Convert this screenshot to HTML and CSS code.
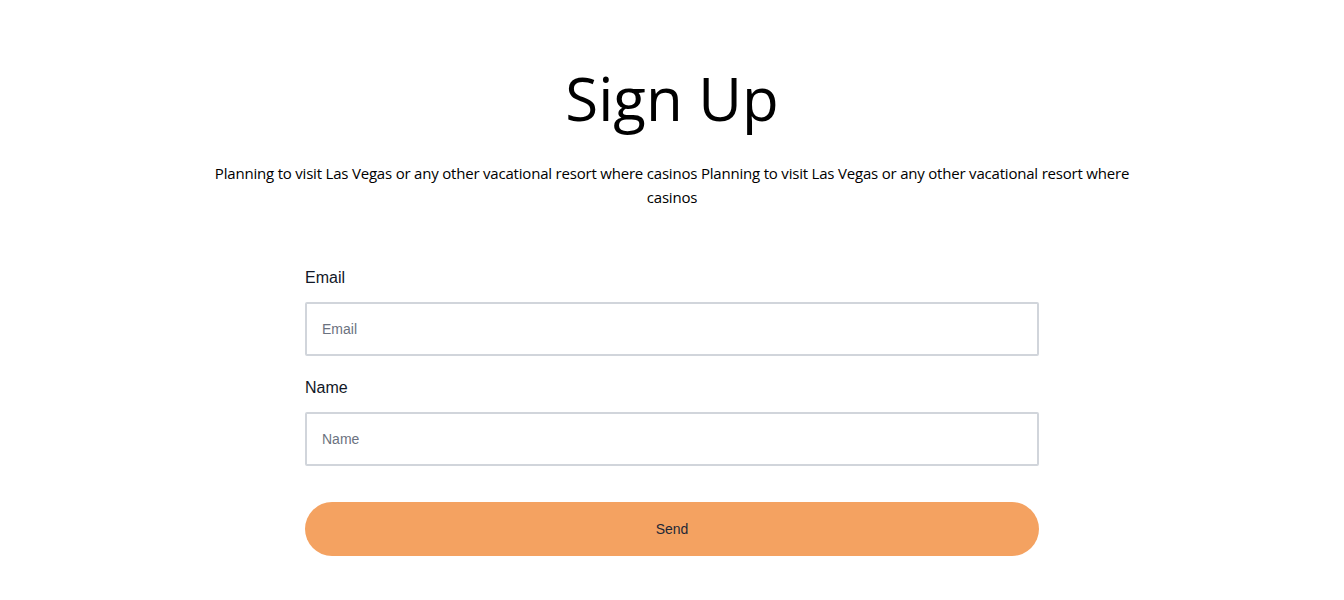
FILE: index.html
```html
<!DOCTYPE html>
<html lang="en">
<head>
<meta charset="utf-8">
<title>Sign Up</title>
<link rel="stylesheet" href="styles.css">
</head>
<body>
<main class="signup">
  <header class="intro">
    <h1 class="title">Sign Up</h1>
    <p class="lead">Planning to visit Las Vegas or any other vacational resort where casinos Planning to visit Las Vegas or any other vacational resort where casinos</p>
  </header>
  <form class="form">
    <div class="field">
      <label class="label" for="email">Email</label>
      <input class="input" id="email" type="email" placeholder="Email">
    </div>
    <div class="field">
      <label class="label" for="name">Name</label>
      <input class="input" id="name" type="text" placeholder="Name">
    </div>
    <button class="send" type="button">Send</button>
  </form>
</main>
</body>
</html>
```

FILE: styles.css
```css
* { box-sizing: border-box; }
html, body { margin: 0; padding: 0; background: #ffffff; }
.signup {
  display: flex;
  flex-direction: column;
  align-items: center;
  padding-top: 62px;
}
.intro {
  width: 920px;
  text-align: center;
}
.title {
  margin: 0;
  font-family: "Open Sans", "Noto Sans", sans-serif;
  font-weight: 400;
  font-size: 60px;
  line-height: 72px;
  color: #000;
}
.lead {
  margin: 27px 0 0;
  font-family: "Open Sans", "Noto Sans", sans-serif;
  font-size: 15px;
  line-height: 24px;
  color: #000;
  letter-spacing: -0.2px;
}
.form {
  width: 734px;
  margin-top: 56px;
  display: flex;
  flex-direction: column;
}
.field {
  display: flex;
  flex-direction: column;
  margin-bottom: 19px;
}
.field + .field { margin-bottom: 36px; }
.label {
  font-family: "Liberation Sans", Arial, sans-serif;
  font-size: 16px;
  line-height: 24px;
  color: #111827;
  margin-top: 1px;
  margin-bottom: 12px;
}
.input {
  height: 54px;
  border: 2px solid #d1d5db;
  border-radius: 2px;
  padding: 0 15px;
  font-family: "Liberation Sans", Arial, sans-serif;
  font-size: 14px;
  color: #111827;
  outline: none;
}
.input::placeholder { color: #6b7280; }
.send {
  height: 54px;
  border: 0;
  border-radius: 27px;
  background: #f4a261;
  font-family: "Liberation Sans", Arial, sans-serif;
  font-size: 14px;
  color: #1f2937;
  cursor: pointer;
}
```
